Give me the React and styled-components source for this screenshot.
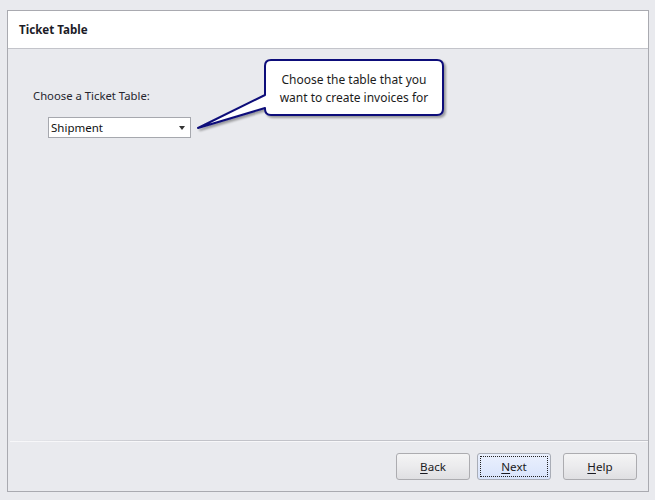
import React from "react";
import styled, { createGlobalStyle } from "styled-components";

const Global = createGlobalStyle`
  html, body { margin: 0; padding: 0; background: #e9eaee; }
  body { font-family: "Noto Sans", "Open Sans", Arial, sans-serif; font-size: 12px; color: #1e1e1e; }
`;

const Page = styled.div`
  width: 655px;
  height: 500px;
  box-sizing: border-box;
  padding: 10px 6px 8px 7px;
  background: #e9eaee;
`;

const Frame = styled.div`
  position: relative;
  height: 482px;
  box-sizing: border-box;
  border: 1px solid #a9aab0;
  display: flex;
  flex-direction: column;
`;

const Header = styled.div`
  height: 37px;
  background: #ffffff;
  border-bottom: 1px solid #c3c4ca;
  display: flex;
  align-items: center;
  padding-left: 11px;
  font-weight: 700;
  font-size: 11.6px;
  color: #1c1c28;
`;

const Body = styled.div`
  flex: 1;
  padding: 39px 0 0 25px;
  display: flex;
  flex-direction: column;
`;

const Label = styled.div`
  font-size: 11.3px;
  color: #26262e;
  line-height: 16px;
`;

const Combo = styled.div`
  margin: 13px 0 0 15px;
  width: 143px;
  height: 21px;
  box-sizing: border-box;
  border: 1px solid #a6a8ae;
  background: #fff;
  display: flex;
  align-items: center;
  justify-content: space-between;
  padding: 0 5px 0 2px;
  font-size: 11.5px;
  color: #111;
`;

const Arrow = styled.span`
  width: 0;
  height: 0;
  border-left: 3.5px solid transparent;
  border-right: 3.5px solid transparent;
  border-top: 4px solid #333;
`;

const Separator = styled.div`
  margin-left: 2px;
  background: linear-gradient(to right, rgba(190,190,198,0) 0%, #c2c3c9 25%, #c2c3c9 100%);
  border-bottom: 1px solid #f7f7f9;
  box-sizing: border-box;
  height: 2px;
`;

const Footer = styled.div`
  height: 49px;
  display: flex;
  justify-content: flex-end;
  align-items: flex-start;
  padding: 11px 11px 0 0;
  box-sizing: border-box;
`;

const Button = styled.button`
  width: 74px;
  height: 27px;
  margin-left: ${p => p.$gap}px;
  box-sizing: border-box;
  border: 1px solid ${p => (p.$focus ? "#a9adb6" : "#acacb0")};
  border-radius: 3px;
  background: ${p =>
    p.$focus
      ? "linear-gradient(#eaf0fd, #d8e3fb)"
      : "linear-gradient(#f4f4f5 0%, #ebebed 50%, #dfdfe2 100%)"};
  font-family: "Noto Sans", "Open Sans", Arial, sans-serif;
  font-size: 11.6px;
  color: #1a1a22;
  padding: 0;
  position: relative;
  display: flex;
  align-items: center;
  justify-content: center;
  &::after {
    content: "";
    display: ${p => (p.$focus ? "block" : "none")};
    position: absolute;
    inset: 2px;
    border: 1px dotted #222;
  }
  u { text-decoration: underline; text-underline-offset: 2px; }
`;

const Callout = styled.div`
  position: absolute;
  left: 174px;
  top: 44px;
  width: 270px;
  height: 90px;
`;

const CalloutText = styled.div`
  position: absolute;
  left: 83px;
  top: 6px;
  width: 178px;
  height: 55px;
  display: flex;
  flex-direction: column;
  align-items: center;
  justify-content: center;
  text-align: center;
  font-size: 12px;
  line-height: 18px;
  color: #1c1c1c;
`;

export default function App() {
  return (
    <Page>
      <Global />
      <Frame>
        <Header>Ticket Table</Header>
        <Body>
          <Label>Choose a Ticket Table:</Label>
          <Combo>
            <span>Shipment</span>
            <Arrow />
          </Combo>
        </Body>
        <Separator />
        <Footer>
          <Button $gap={0}><span><u>B</u>ack</span></Button>
          <Button $gap={7} $focus><span><u>N</u>ext</span></Button>
          <Button $gap={12}><span><u>H</u>elp</span></Button>
        </Footer>
        <Callout>
          <svg width="270" height="90" viewBox="0 0 270 90">
            <defs>
              <filter id="sh" x="-10%" y="-10%" width="130%" height="140%">
                <feGaussianBlur in="SourceAlpha" stdDeviation="1.2" />
                <feOffset dx="2" dy="2" result="o" />
                <feComponentTransfer><feFuncA type="linear" slope="0.35" /></feComponentTransfer>
                <feMerge><feMergeNode /><feMergeNode in="SourceGraphic" /></feMerge>
              </filter>
            </defs>
            <path
              d="M 89 5 H 255 Q 261 5 261 11 V 54 Q 261 60 255 60 H 89 Q 83 60 83 54 V 53 L 16 73 L 83 40 V 11 Q 83 5 89 5 Z"
              fill="#ffffff"
              stroke="#10107a"
              strokeWidth="2"
              strokeLinejoin="round"
              filter="url(#sh)"
            />
          </svg>
          <CalloutText>
            <div>Choose the table that you</div>
            <div>want to create invoices for</div>
          </CalloutText>
        </Callout>
      </Frame>
    </Page>
  );
}
